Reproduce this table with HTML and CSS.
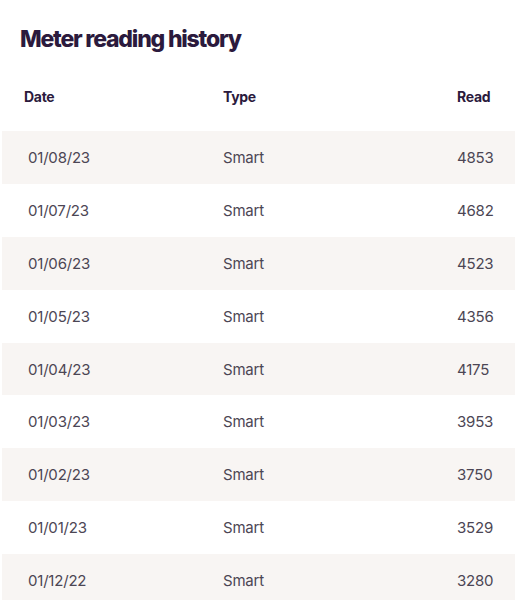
FILE: index.html
```html
<!DOCTYPE html>
<html>
<head>
<meta charset="utf-8">
<link rel="stylesheet" href="styles.css">
</head>
<body>
<div class="page">
  <h1 class="title">Meter reading history</h1>
  <div class="table">
    <div class="head">
      <span class="c-date">Date</span>
      <span class="c-type">Type</span>
      <span class="c-read">Read</span>
    </div>
    <div class="row alt"><span class="c-date">01/08/23</span><span class="c-type">Smart</span><span class="c-read">4853</span></div>
    <div class="row"><span class="c-date">01/07/23</span><span class="c-type">Smart</span><span class="c-read">4682</span></div>
    <div class="row alt"><span class="c-date">01/06/23</span><span class="c-type">Smart</span><span class="c-read">4523</span></div>
    <div class="row"><span class="c-date">01/05/23</span><span class="c-type">Smart</span><span class="c-read">4356</span></div>
    <div class="row alt"><span class="c-date">01/04/23</span><span class="c-type">Smart</span><span class="c-read">4175</span></div>
    <div class="row"><span class="c-date">01/03/23</span><span class="c-type">Smart</span><span class="c-read">3953</span></div>
    <div class="row alt"><span class="c-date">01/02/23</span><span class="c-type">Smart</span><span class="c-read">3750</span></div>
    <div class="row"><span class="c-date">01/01/23</span><span class="c-type">Smart</span><span class="c-read">3529</span></div>
    <div class="row alt"><span class="c-date">01/12/22</span><span class="c-type">Smart</span><span class="c-read">3280</span></div>
  </div>
</div>
</body>
</html>
```
FILE: styles.css
```css
html, body {
  margin: 0;
  padding: 0;
  background: #ffffff;
}
body {
  font-family: Inter, "Liberation Sans", sans-serif;
  color: #2b1a3d;
}
.page {
  padding: 24px 0 0 2px;
}
.title {
  margin: 0 0 0 18px;
  height: 30px;
  font-size: 23px;
  line-height: 30px;
  font-weight: 800;
  letter-spacing: -1.2px;
  word-spacing: 0;
  color: #2b1a3d;
}
.head {
  display: grid;
  grid-template-columns: 199px 234px 1fr;
  height: 77px;
  box-sizing: border-box;
  padding: 34px 0 0 22px;
  font-size: 14px;
  line-height: 18px;
  font-weight: 700;
  letter-spacing: -0.3px;
  color: #2b1a3d;
}
.row {
  display: grid;
  grid-template-columns: 195px 234px 1fr;
  height: 52.9px;
  align-items: center;
  padding: 0 0 0 26px;
  font-size: 15px;
  color: #4c4654;
  letter-spacing: -0.2px;
}
.alt {
  background: #f8f5f3;
}
```
